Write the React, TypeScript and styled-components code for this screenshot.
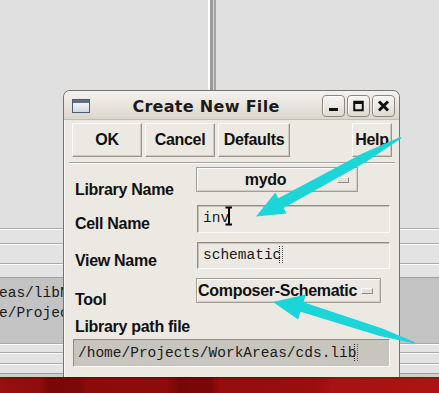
import React from 'react';
import styled, { createGlobalStyle } from 'styled-components';

const GlobalStyle = createGlobalStyle`
  *, *::before, *::after { box-sizing: border-box; }
  html, body { margin: 0; padding: 0; background: #e0e0e0; }
  body { font-family: "Liberation Sans", Arial, sans-serif; }
`;

// Desktop behind the dialog
const Desktop = styled.div`
  position: relative;
  width: 439px;
  height: 393px;
  overflow: hidden;
  display: flex;
  flex-direction: column;
  background: #e0e0e0;
`;

const TopArea = styled.div`
  height: 228px;
  flex: none;
  display: flex;
`;

const Splitter = styled.div`
  width: 9px;
  margin-left: 208px;
  background: linear-gradient(to right, #fdfdfd 0 2px, #9b9b9b 2px 5px, #d6d6d6 5px 6px, #a2a2a2 6px 8px, #e0e0e0 8px);
`;

const ListRow = styled.div<{ $h: number }>`
  height: ${({ $h }) => $h}px;
  flex: none;
  border-top: 1px solid #a9a9a9;
  box-shadow: inset 0 1px 0 #fbfbfb;
  background: #e3e3e3;
`;

const GrayPanel = styled.div`
  height: 66px;
  flex: none;
  background: #c3c3c3;
  border-top: 1px solid #a0a0a0;
  padding: 5px 0 0 0;
  font: 14.5px/20px "Liberation Mono", "Courier New", monospace;
  color: #1a1a1a;
  white-space: nowrap;
`;

const PanelLine = styled.div`
  margin-left: -1px;
`;

const BottomEdge = styled.div`
  height: 4px;
  flex: none;
  background: #cdcdcd;
  border-top: 1px solid #9d9d9d;
`;

const Taskbar = styled.div`
  height: 16px;
  flex: none;
  background: linear-gradient(to right, #970f0f 0%, #8f0d0d 9%, #7a0707 11%, #7c0808 18%, #8b0b0b 20%, #8d0b0b 38%, #760606 41%, #7b0808 48%, #940c0c 50%, #9a0e0e 72%, #a81212 76%, #ad1313 100%);
  box-shadow: inset 0 2px 0 rgba(0, 0, 0, 0.12);
`;

// Dialog window
const Dialog = styled.div`
  position: absolute;
  left: 63px;
  top: 90px;
  width: 337px;
  height: 287px;
  border: 1px solid #77726a;
  border-bottom: none;
  border-radius: 7px 7px 0 0;
  background: #ece9e3;
  display: flex;
  flex-direction: column;
  overflow: hidden;
`;

const TitleBar = styled.div`
  height: 29px;
  flex: none;
  display: flex;
  align-items: center;
  padding: 1px 4px 0 8px;
  background: linear-gradient(#f5f3ef, #dbd6cd);
  border-bottom: 1px solid #c2bdb4;
`;

const TitleText = styled.div`
  flex: 1;
  text-align: center;
  padding-top: 2px;
  font: bold 16px/20px "DejaVu Sans", "Liberation Sans", sans-serif;
  letter-spacing: 0.3px;
  color: #1b1b1b;
`;

const TitleButtons = styled.div`
  display: flex;
  gap: 2px;
`;

const TitleButton = styled.div`
  width: 23px;
  height: 22px;
  border: 1px solid #8d887f;
  border-radius: 4px;
  background: linear-gradient(#f8f6f2, #dfdad1);
  box-shadow: inset 1px 1px 0 #ffffff;
  display: flex;
  align-items: center;
  justify-content: center;
`;

const Body = styled.div`
  flex: 1;
  display: flex;
  flex-direction: column;
  padding: 3px 7px 8px 8px;
  box-shadow: inset 1px 0 0 #f8f7f4;
`;

const ButtonRow = styled.div`
  display: flex;
  gap: 3px;
  height: 34px;
  flex: none;
`;

const PushButton = styled.button<{ $w: number; $right?: boolean }>`
  width: ${({ $w }) => $w}px;
  height: 34px;
  padding: 0;
  margin-left: ${({ $right }) => ($right ? 'auto' : '0')};
  background: #ece9e3;
  border: 1px solid;
  border-color: #fdfdfc #9a968f #9a968f #fdfdfc;
  box-shadow: inset -1px -1px 0 #cdc9c2;
  font: bold 16px/18px "Liberation Sans", Arial, sans-serif;
  letter-spacing: -0.3px;
  color: #111;
  white-space: nowrap;
`;

const Separator = styled.div`
  height: 2px;
  flex: none;
  margin: 5px -3px 0;
  border-top: 1px solid #a7a39b;
  border-bottom: 1px solid #fdfdfc;
`;

const FieldRow = styled.div<{ $top: number }>`
  display: flex;
  align-items: flex-start;
  margin-top: ${({ $top }) => $top}px;
  flex: none;
`;

const Label = styled.div<{ $offset?: number }>`
  width: 124px;
  flex: none;
  padding-left: 3px;
  margin-top: ${({ $offset }) => $offset ?? 0}px;
  font: bold 16px/18px "Liberation Sans", Arial, sans-serif;
  letter-spacing: -0.3px;
  color: #111;
  white-space: nowrap;
`;

const Dropdown = styled.div<{ $w: number }>`
  width: ${({ $w }) => $w}px;
  height: 25px;
  display: flex;
  align-items: center;
  border: 1px solid #a29e96;
  box-shadow: inset 1px 1px 0 #ffffff, inset -1px -1px 0 #d2cec6;
  background: #ece9e3;
`;

const DropText = styled.div<{ $center?: boolean }>`
  flex: 1;
  padding-left: 1px;
  text-align: ${({ $center }) => ($center ? 'center' : 'left')};
  font: bold 16px/18px "Liberation Sans", Arial, sans-serif;
  letter-spacing: -0.3px;
  color: #111;
  white-space: nowrap;
`;

const Indicator = styled.div`
  width: 12px;
  height: 6px;
  margin: 1px 8px 0 4px;
  flex: none;
  border: 1px solid;
  border-color: #ffffff #8f8b84 #8f8b84 #ffffff;
  background: #e4e0d9;
`;

const TextInput = styled.div<{ $w: number; $h: number; $gray?: boolean }>`
  width: ${({ $w }) => $w}px;
  height: ${({ $h }) => $h}px;
  margin-left: 1px;
  border: 1px solid;
  border-color: #928e87 #fbfaf8 #fbfaf8 #928e87;
  box-shadow: inset 1px 1px 0 #c6c2ba;
  background: ${({ $gray }) => ($gray ? '#c8c5bf' : '#ece9e3')};
  padding: ${({ $gray }) => ($gray ? '4px 4px' : '3px 5px')};
  font: 14.5px/18px "Liberation Mono", "Courier New", monospace;
  color: #1a1a1a;
  white-space: nowrap;
`;

const Caret = styled.span`
  display: inline-block;
  width: 4px;
  height: 17px;
  margin-left: -2px;
  vertical-align: -4px;
  border-left: 1px dotted #222;
  border-right: 1px dotted #555;
`;

const Overlay = styled.svg`
  position: absolute;
  left: 0;
  top: 0;
  width: 439px;
  height: 393px;
  pointer-events: none;
`;

export default function App() {
  return (
    <>
      <GlobalStyle />
      <Desktop>
        <TopArea>
          <Splitter />
        </TopArea>
        <ListRow $h={15} />
        <ListRow $h={20} />
        <ListRow $h={14} />
        <GrayPanel>
          <PanelLine>eas/libN</PanelLine>
          <PanelLine>e/Projects</PanelLine>
        </GrayPanel>
        <ListRow $h={9} />
        <ListRow $h={11} />
        <ListRow $h={10} />
        <BottomEdge />
        <Taskbar />

        <Dialog>
          <TitleBar>
            <svg width="18" height="14" viewBox="0 0 18 14">
              <defs>
                <linearGradient id="wi" x1="0" y1="0" x2="0" y2="1">
                  <stop offset="0" stopColor="#ffffff" />
                  <stop offset="1" stopColor="#cfd8e2" />
                </linearGradient>
              </defs>
              <rect x="0.5" y="0.5" width="17" height="13" fill="url(#wi)" stroke="#4d5b6b" />
              <rect x="1" y="1" width="16" height="3" fill="#5f6e80" />
            </svg>
            <TitleText>Create New File</TitleText>
            <TitleButtons>
              <TitleButton>
                <svg width="11" height="12" viewBox="0 0 11 12">
                  <rect x="1" y="8" width="9" height="3" fill="#111" />
                </svg>
              </TitleButton>
              <TitleButton>
                <svg width="11" height="12" viewBox="0 0 11 12">
                  <rect x="1.25" y="1.75" width="8.5" height="8.5" fill="none" stroke="#111" strokeWidth="2" />
                  <rect x="1" y="1" width="9" height="3" fill="#111" />
                </svg>
              </TitleButton>
              <TitleButton>
                <svg width="13" height="12" viewBox="0 0 13 12">
                  <path d="M2 1.5 L11 10.5 M11 1.5 L2 10.5" stroke="#111" strokeWidth="3" />
                </svg>
              </TitleButton>
            </TitleButtons>
          </TitleBar>

          <Body>
            <ButtonRow>
              <PushButton $w={70}>OK</PushButton>
              <PushButton $w={70}>Cancel</PushButton>
              <PushButton $w={72}>Defaults</PushButton>
              <PushButton $w={40} $right>Help</PushButton>
            </ButtonRow>
            <Separator />

            <FieldRow $top={3}>
              <Label $offset={14}>Library Name</Label>
              <Dropdown $w={162}>
                <DropText $center>mydo</DropText>
                <Indicator />
              </Dropdown>
            </FieldRow>

            <FieldRow $top={6}>
              <Label $offset={10}>Cell Name</Label>
              <TextInput $w={193} $h={28}>inv</TextInput>
            </FieldRow>

            <FieldRow $top={9}>
              <Label $offset={10}>View Name</Label>
              <TextInput $w={193} $h={27}>schematic<Caret /></TextInput>
            </FieldRow>

            <FieldRow $top={8}>
              <Label $offset={13}>Tool</Label>
              <Dropdown $w={185}>
                <DropText>Composer-Schematic</DropText>
                <Indicator />
              </Dropdown>
            </FieldRow>

            <Label $offset={9}>Library path file</Label>
            <FieldRow $top={3}>
              <TextInput $w={317} $h={28} $gray>/home/Projects/WorkAreas/cds.lib<Caret /></TextInput>
            </FieldRow>
          </Body>
        </Dialog>

        <Overlay viewBox="0 0 439 393">
          {/* mouse I-beam */}
          <path d="M225.5 207.5 H232 M225.5 224.5 H232 M229 207.5 V224.5" stroke="#000" strokeWidth="2" fill="none" />
          {/* annotation arrows */}
          <polygon
            points="400.6,136.8 362.9,153.2 278.4,198.2 275.3,192.4 256,216.5 286.6,213.6 283.6,207.9 367.1,161.2 401.4,138.2"
            fill="#1bd5d8"
          />
          <polygon
            points="415.4,342.6 382.3,328.4 303.5,302.2 305.9,294.6 273,302 298.1,319.4 300.5,311.8 379.9,336.0 414.6,343.4"
            fill="#1bd5d8"
          />
        </Overlay>
      </Desktop>
    </>
  );
}
